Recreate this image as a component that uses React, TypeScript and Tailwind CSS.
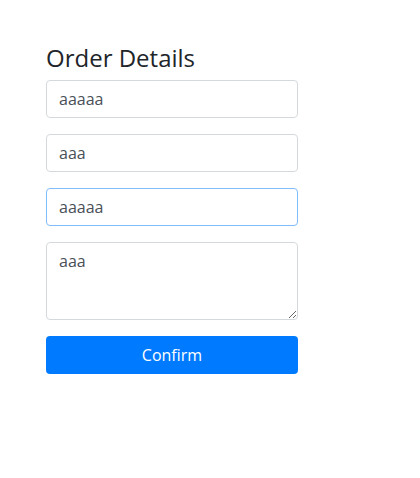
export default function App() {
    return (
        <div className="min-h-[478px] bg-white pl-[46px] pt-[44px] font-['Open_Sans',sans-serif]">
            <form className="w-[252px]" onSubmit={(e) => e.preventDefault()}>
                <h4 className="mb-[7px] text-[24px] leading-[1.2] font-normal text-[#212529]">Order Details</h4>
                <input
                    className="mb-4 block h-[38px] w-full rounded border border-[#d6d9dc] px-3 text-base text-[#495057] outline-none"
                    defaultValue="aaaaa"
                />
                <input
                    className="mb-4 block h-[38px] w-full rounded border border-[#d6d9dc] px-3 text-base text-[#495057] outline-none"
                    defaultValue="aaa"
                />
                <input
                    className="mb-4 block h-[38px] w-full rounded border border-[#80bdff] px-3 text-base text-[#495057] outline-none"
                    defaultValue="aaaaa"
                />
                <textarea
                    className="mb-4 block h-[78px] w-full rounded border border-[#d6d9dc] px-3 py-1.5 text-base leading-6 text-[#495057] outline-none"
                    defaultValue="aaa"
                />
                <button
                    type="submit"
                    className="block h-[38px] w-full rounded bg-[#007bff] text-base text-white"
                >
                    Confirm
                </button>
            </form>
        </div>
    )
}
